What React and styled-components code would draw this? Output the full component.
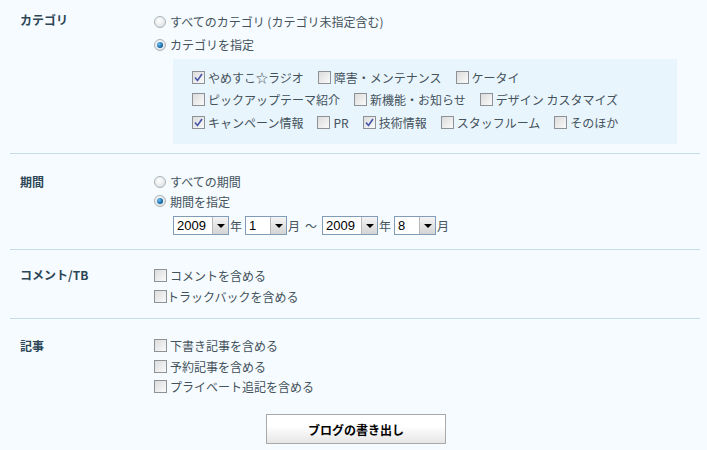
import React from 'react';
import styled, { createGlobalStyle } from 'styled-components';

const GlobalStyle = createGlobalStyle`
  body {
    margin: 0;
    background: #f5fbfe;
    font-family: "Noto Sans CJK JP", "DejaVu Sans", sans-serif;
    font-size: 12px;
    color: #44525c;
  }
`;

const Page = styled.div`
  width: 707px;
  padding: 0 7px 0 10px;
  box-sizing: border-box;
`;

const Section = styled.div`
  display: grid;
  grid-template-columns: 134px 1fr;
  padding: ${(p) => p.$pad || '10px 0 10px 10px'};
  border-bottom: ${(p) => (p.$last ? 'none' : '1px solid #c4dde6')};
`;

const Label = styled.div`
  font-weight: bold;
  color: #2d4657;
  line-height: 20px;
`;

const Options = styled.div`
  display: flex;
  flex-direction: column;
`;

const Row = styled.div`
  display: flex;
  align-items: center;
  height: ${(p) => p.$h || 20}px;
  margin-left: ${(p) => p.$indent || 0}px;
  white-space: nowrap;
`;

const Item = styled.label`
  display: inline-flex;
  align-items: center;
  margin-right: ${(p) => p.$gap ?? 14}px;
`;

const RadioDot = styled.span`
  width: 12px;
  height: 12px;
  border-radius: 50%;
  border: 1px solid #a9b2b8;
  box-sizing: border-box;
  background: radial-gradient(circle at 40% 35%, #ffffff, #d6d9dc);
  margin-right: 4px;
  display: inline-flex;
  align-items: center;
  justify-content: center;
  &::after {
    content: '';
    display: ${(p) => (p.$on ? 'block' : 'none')};
    width: 6px;
    height: 6px;
    border-radius: 50%;
    background: radial-gradient(circle at 35% 35%, #6fc0f0, #0a5d9a 70%);
  }
`;

const Box = styled.span`
  width: 13px;
  height: 13px;
  border: 1px solid #8c9296;
  box-sizing: border-box;
  background: linear-gradient(135deg, #dcdcdc, #fafafa);
  margin-right: ${(p) => p.$gap ?? 3}px;
  display: inline-flex;
  align-items: center;
  justify-content: center;
  flex-shrink: 0;
`;

const CategoryPanel = styled.div`
  background: #e9f5fd;
  margin: 3px 23px 0 19px;
  padding: 7px 19px 10px;
`;

const Select = styled.span`
  display: inline-flex;
  align-items: stretch;
  width: ${(p) => p.$w}px;
  height: 19px;
  box-sizing: border-box;
  border: 1px solid #7f9db9;
  background: #fff;
  color: #000;
  font-family: "Liberation Sans", Arial, sans-serif;
  font-size: 13px;
`;

const SelectValue = styled.span`
  flex: 1;
  padding-left: 3px;
  line-height: 17px;
`;

const SelectArrow = styled.span`
  width: 15px;
  background: linear-gradient(#f4f4f4, #d4d4d4);
  border-left: 1px solid #b8b8b8;
  display: flex;
  align-items: center;
  justify-content: center;
  &::after {
    content: '';
    border-left: 4px solid transparent;
    border-right: 4px solid transparent;
    border-top: 4px solid #000;
  }
`;

const Unit = styled.span`
  margin: 0 ${(p) => p.$r ?? 3}px 0 1px;
`;

const ButtonWrap = styled.div`
  display: flex;
  justify-content: center;
  padding: 17px 0 0 2px;
`;

const Button = styled.button`
  width: 180px;
  height: 30px;
  border: 1px solid #a9a9a9;
  background: linear-gradient(#ffffff 40%, #e6e6e6);
  font-family: "Noto Sans CJK JP", sans-serif;
  font-size: 12px;
  font-weight: bold;
  color: #000;
`;

const Check = () => (
  <svg width="9" height="9" viewBox="0 0 9 9">
    <path d="M1 4.5 L3.5 7.5 L8 1" fill="none" stroke="#4656a8" strokeWidth="1.6" />
  </svg>
);

const CheckItem = ({ on, children, gap }) => (
  <Item $gap={gap}>
    <Box>{on && <Check />}</Box>
    {children}
  </Item>
);

const RadioItem = ({ on, children }) => (
  <Item>
    <RadioDot $on={on} />
    {children}
  </Item>
);

const DateSelect = ({ value, w }) => (
  <Select $w={w}>
    <SelectValue>{value}</SelectValue>
    <SelectArrow />
  </Select>
);

const categories = [
  [['やめすこ☆ラジオ', true], ['障害・メンテナンス'], ['ケータイ']],
  [['ピックアップテーマ紹介'], ['新機能・お知らせ'], ['デザイン カスタマイズ']],
  [['キャンペーン情報', true], ['PR'], ['技術情報', true], ['スタッフルーム'], ['そのほか']],
];

export default function App() {
  return (
    <Page>
      <GlobalStyle />
      <Section $pad="10px 0 9px 10px">
        <Label>カテゴリ</Label>
        <Options>
          <Row $h={23}>
            <RadioItem>すべてのカテゴリ (カテゴリ未指定含む)</RadioItem>
          </Row>
          <Row $h={23}>
            <RadioItem on>カテゴリを指定</RadioItem>
          </Row>
          <CategoryPanel>
            {categories.map((row, i) => (
              <Row key={i} $h={22.5}>
                {row.map(([name, on]) => (
                  <CheckItem key={name} on={on}>{name}</CheckItem>
                ))}
              </Row>
            ))}
          </CategoryPanel>
        </Options>
      </Section>

      <Section $pad="18px 0 8px 10px">
        <Label>期間</Label>
        <Options>
          <Row $h={20}>
            <RadioItem>すべての期間</RadioItem>
          </Row>
          <Row $h={19}>
            <RadioItem on>期間を指定</RadioItem>
          </Row>
          <Row $h={30} $indent={19}>
            <DateSelect value="2009" w={56} />
            <Unit>年</Unit>
            <DateSelect value="1" w={42} />
            <Unit $r={4}>月</Unit>
            <Unit $r={5}>～</Unit>
            <DateSelect value="2009" w={56} />
            <Unit>年</Unit>
            <DateSelect value="8" w={42} />
            <Unit>月</Unit>
          </Row>
        </Options>
      </Section>

      <Section $pad="15px 0 11px 10px">
        <Label>コメント/TB</Label>
        <Options>
          <Row $h={21}>
            <CheckItem gap={0}>コメントを含める</CheckItem>
          </Row>
          <Row $h={21}>
            <Item>
              <Box $gap={0} />
              トラックバックを含める
            </Item>
          </Row>
        </Options>
      </Section>

      <Section $pad="17px 0 0 10px" $last>
        <Label>記事</Label>
        <Options>
          <Row $h={20.5}>
            <CheckItem>下書き記事を含める</CheckItem>
          </Row>
          <Row $h={20.5}>
            <CheckItem>予約記事を含める</CheckItem>
          </Row>
          <Row $h={20.5}>
            <CheckItem>プライベート追記を含める</CheckItem>
          </Row>
        </Options>
      </Section>
      <ButtonWrap>
        <Button>ブログの書き出し</Button>
      </ButtonWrap>
    </Page>
  );
}
